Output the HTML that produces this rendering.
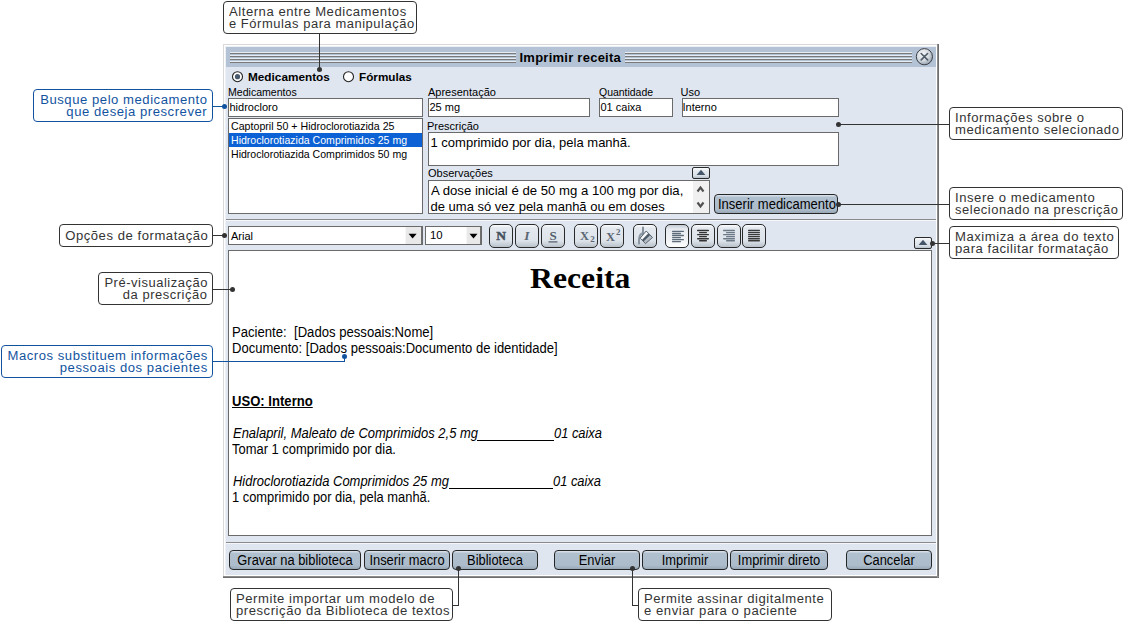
<!DOCTYPE html><html><head><meta charset="utf-8"><style>
html,body{margin:0;padding:0;background:#fff;}
#c{position:relative;width:1124px;height:622px;overflow:hidden;background:#fff;}
.t{position:absolute;white-space:pre;}
.r{position:absolute;}
.btn{position:absolute;box-sizing:border-box;border:1px solid #262626;border-radius:4px;background:linear-gradient(#d5dfe9 0,#d5dfe9 1px,#b1c0cf 2px,#adbccb 80%,#98a7b6 100%);}
.tb{position:absolute;box-sizing:border-box;border:1.5px solid #2a2a2a;border-radius:5px;background:linear-gradient(#fbfcfd 0,#e4e9ef 3px,#dde3ea 72%,#b8c1ca 100%);}
</style></head><body><div id="c">
<div class="r" style="left:223px;top:44px;width:716px;height:534px;background:#6e6e6e;"></div>
<div class="r" style="left:223px;top:44px;width:714px;height:532px;background:#d9d9d9;"></div>
<div class="r" style="left:224px;top:45px;width:713px;height:531px;background:#fff;"></div>
<div class="r" style="left:224px;top:45px;width:712px;height:530px;background:#fff;"></div>
<div class="r" style="left:225px;top:46px;width:711px;height:529px;background:#edf1f5;"></div>
<div class="r" style="left:226px;top:47px;width:710px;height:528px;background:#dfe6f0;"></div>
<div class="r" style="left:937px;top:44px;width:1px;height:534px;background:#8c8c8c;"></div>
<div class="r" style="left:223px;top:576px;width:716px;height:1px;background:#8c8c8c;"></div>
<div class="r" style="left:226px;top:47px;width:710px;height:20px;background:#b3c2d4;"></div>
<div class="r" style="left:230px;top:52px;width:682px;height:1px;background:#e6ecf3;"></div>
<div class="r" style="left:230px;top:53px;width:682px;height:1px;background:#7a7a7a;"></div>
<div class="r" style="left:230px;top:55px;width:682px;height:1px;background:#e6ecf3;"></div>
<div class="r" style="left:230px;top:56px;width:682px;height:1px;background:#7a7a7a;"></div>
<div class="r" style="left:230px;top:58px;width:682px;height:1px;background:#e6ecf3;"></div>
<div class="r" style="left:230px;top:59px;width:682px;height:1px;background:#7a7a7a;"></div>
<div class="r" style="left:230px;top:61px;width:682px;height:1px;background:#e6ecf3;"></div>
<div class="r" style="left:230px;top:62px;width:682px;height:1px;background:#7a7a7a;"></div>
<div class="r" style="left:516px;top:47px;width:109px;height:20px;background:#b3c2d4;"></div>
<div class="t" style="left:519.5px;top:50.50px;font-family:'Liberation Sans',sans-serif;font-size:13px;line-height:13px;font-weight:bold;font-style:normal;color:#000;transform:scaleX(1.0);transform-origin:left top;letter-spacing:0.25px;">Imprimir receita</div>
<svg class="r" style="left:914px;top:46px" width="21" height="21" viewBox="0 0 21 21">
<defs><radialGradient id="cg" cx="0.4" cy="0.35" r="0.7"><stop offset="0" stop-color="#f6f8fa"/><stop offset="0.55" stop-color="#d5dbe2"/><stop offset="1" stop-color="#8e99a5"/></radialGradient></defs>
<circle cx="10.4" cy="10.7" r="8.1" fill="url(#cg)" stroke="#3b3f45" stroke-width="1"/>
<path d="M7.2 7.5 L13.6 13.9 M13.6 7.5 L7.2 13.9" stroke="#4f5b68" stroke-width="1.6" stroke-linecap="round"/>
</svg>
<svg class="r" style="left:231px;top:70px" width="14" height="14" viewBox="0 0 14 14">
<circle cx="6.5" cy="6.7" r="5" fill="#fff" stroke="#222" stroke-width="1.1"/><circle cx="6.5" cy="6.7" r="2.6" fill="#4a5a6e"/></svg>
<svg class="r" style="left:342px;top:70px" width="14" height="14" viewBox="0 0 14 14">
<circle cx="6.5" cy="6.7" r="5" fill="#fff" stroke="#222" stroke-width="1.1"/></svg>
<div class="t" style="left:247.5px;top:71.87px;font-family:'Liberation Sans',sans-serif;font-size:11.5px;line-height:11.5px;font-weight:bold;font-style:normal;color:#000;transform:scaleX(1.025);transform-origin:left top;">Medicamentos</div>
<div class="t" style="left:358.5px;top:71.87px;font-family:'Liberation Sans',sans-serif;font-size:11.5px;line-height:11.5px;font-weight:bold;font-style:normal;color:#000;transform:scaleX(1.02);transform-origin:left top;">Fórmulas</div>
<div class="t" style="left:227.5px;top:87.19px;font-family:'Liberation Sans',sans-serif;font-size:11px;line-height:11px;font-weight:normal;font-style:normal;color:#000;transform:scaleX(0.96);transform-origin:left top;">Medicamentos</div>
<div class="t" style="left:428px;top:87.19px;font-family:'Liberation Sans',sans-serif;font-size:11px;line-height:11px;font-weight:normal;font-style:normal;color:#000;">Apresentação</div>
<div class="t" style="left:599px;top:87.19px;font-family:'Liberation Sans',sans-serif;font-size:11px;line-height:11px;font-weight:normal;font-style:normal;color:#000;transform:scaleX(0.95);transform-origin:left top;">Quantidade</div>
<div class="t" style="left:680.5px;top:87.19px;font-family:'Liberation Sans',sans-serif;font-size:11px;line-height:11px;font-weight:normal;font-style:normal;color:#000;">Uso</div>
<div class="r" style="left:228px;top:98px;width:195px;height:19px;box-sizing:border-box;border:1px solid #6a6a6a;background:#fff;"></div>
<div class="r" style="left:428px;top:98px;width:162px;height:19px;box-sizing:border-box;border:1px solid #6a6a6a;background:#fff;"></div>
<div class="r" style="left:599px;top:98px;width:74px;height:19px;box-sizing:border-box;border:1px solid #6a6a6a;background:#fff;"></div>
<div class="r" style="left:682px;top:98px;width:157px;height:19px;box-sizing:border-box;border:1px solid #6a6a6a;background:#fff;"></div>
<div class="t" style="left:229.5px;top:102.19px;font-family:'Liberation Sans',sans-serif;font-size:11px;line-height:11px;font-weight:normal;font-style:normal;color:#000;">hidrocloro</div>
<div class="t" style="left:429.5px;top:102.19px;font-family:'Liberation Sans',sans-serif;font-size:11px;line-height:11px;font-weight:normal;font-style:normal;color:#000;">25 mg</div>
<div class="t" style="left:600.5px;top:102.19px;font-family:'Liberation Sans',sans-serif;font-size:11px;line-height:11px;font-weight:normal;font-style:normal;color:#000;">01 caixa</div>
<div class="t" style="left:682.5px;top:102.19px;font-family:'Liberation Sans',sans-serif;font-size:11px;line-height:11px;font-weight:normal;font-style:normal;color:#000;">Interno</div>
<div class="r" style="left:228px;top:118px;width:195px;height:96px;box-sizing:border-box;border:1px solid #6a6a6a;background:#fff;"></div>
<div class="r" style="left:229px;top:133px;width:193px;height:14px;background:#0c62d4;"></div>
<div class="t" style="left:230.5px;top:120.69px;font-family:'Liberation Sans',sans-serif;font-size:11px;line-height:11px;font-weight:normal;font-style:normal;color:#000;transform:scaleX(0.967);transform-origin:left top;">Captopril 50 + Hidroclorotiazida 25</div>
<div class="t" style="left:230.5px;top:134.69px;font-family:'Liberation Sans',sans-serif;font-size:11px;line-height:11px;font-weight:normal;font-style:normal;color:#fff;transform:scaleX(0.96);transform-origin:left top;">Hidroclorotiazida Comprimidos 25 mg</div>
<div class="t" style="left:230.5px;top:148.69px;font-family:'Liberation Sans',sans-serif;font-size:11px;line-height:11px;font-weight:normal;font-style:normal;color:#000;transform:scaleX(0.96);transform-origin:left top;">Hidroclorotiazida Comprimidos 50 mg</div>
<div class="t" style="left:427px;top:121.19px;font-family:'Liberation Sans',sans-serif;font-size:11px;line-height:11px;font-weight:normal;font-style:normal;color:#000;">Prescrição</div>
<div class="r" style="left:428px;top:132px;width:411px;height:34px;box-sizing:border-box;border:1px solid #6a6a6a;background:#fff;"></div>
<div class="t" style="left:430.5px;top:135.50px;font-family:'Liberation Sans',sans-serif;font-size:13px;line-height:13px;font-weight:normal;font-style:normal;color:#000;">1 comprimido por dia, pela manhã.</div>
<div class="t" style="left:428px;top:167.69px;font-family:'Liberation Sans',sans-serif;font-size:11px;line-height:11px;font-weight:normal;font-style:normal;color:#000;">Observações</div>
<div class="r" style="left:428px;top:180px;width:282px;height:34px;box-sizing:border-box;border:1px solid #6a6a6a;background:#fff;"></div>
<div class="r" style="left:693px;top:181px;width:16px;height:32px;background:#f0f0f0;"></div>
<svg class="r" style="left:693px;top:181px" width="16" height="32" viewBox="0 0 16 32">
<path d="M4.5 10.5 L7.5 6.5 L10.5 10.5" fill="none" stroke="#505050" stroke-width="2.1"/>
<path d="M4.5 21.5 L7.5 25.5 L10.5 21.5" fill="none" stroke="#505050" stroke-width="2.1"/></svg>
<div class="t" style="left:430.5px;top:183.50px;font-family:'Liberation Sans',sans-serif;font-size:13px;line-height:13px;font-weight:normal;font-style:normal;color:#000;transform:scaleX(1.012);transform-origin:left top;">A dose inicial é de 50 mg a 100 mg por dia,</div>
<div class="t" style="left:430.5px;top:200.00px;font-family:'Liberation Sans',sans-serif;font-size:13px;line-height:13px;font-weight:normal;font-style:normal;color:#000;">de uma só vez pela manhã ou em doses</div>
<div class="tb" style="left:692px;top:167px;width:18px;height:12px;border-radius:2px;"></div>
<svg class="r" style="left:692px;top:167px" width="18" height="12" viewBox="0 0 18 12"><path d="M4.6 7.9 L9 2.8 L13.4 7.9 Z" fill="#46566a"/></svg>
<div class="btn" style="left:714px;top:194px;width:124px;height:20px;"></div>
<div class="t" style="left:717.5px;top:197.15px;font-family:'Liberation Sans',sans-serif;font-size:14px;line-height:14px;font-weight:normal;font-style:normal;color:#000;transform:scaleX(0.93);transform-origin:left top;">Inserir medicamento</div>
<div class="r" style="left:226px;top:219px;width:710px;height:1px;background:#8a8a8a;"></div>
<div class="r" style="left:226px;top:220px;width:710px;height:1px;background:#f4f6f9;"></div>
<div class="r" style="left:228px;top:226px;width:195px;height:19px;box-sizing:border-box;border:1px solid #6a6a6a;background:#fff;"></div>
<div class="r" style="left:421px;top:227px;width:1px;height:17px;background:#707070;"></div>
<div class="r" style="left:405px;top:227px;width:16px;height:17px;background:#e9e9e9;border-left:1px solid #f6f6f6;box-sizing:border-box;"></div>
<svg class="r" style="left:404px;top:227px" width="18" height="18" viewBox="0 0 18 18"><path d="M4.6 6.7 L12.6 6.7 L8.6 11.4 Z" fill="#000"/></svg>
<div class="t" style="left:231px;top:230.69px;font-family:'Liberation Sans',sans-serif;font-size:11px;line-height:11px;font-weight:normal;font-style:normal;color:#000;">Arial</div>
<div class="r" style="left:425px;top:226px;width:57px;height:19px;box-sizing:border-box;border:1px solid #6a6a6a;background:#fff;"></div>
<div class="r" style="left:480px;top:227px;width:1px;height:17px;background:#707070;"></div>
<div class="r" style="left:466px;top:227px;width:14px;height:17px;background:#e9e9e9;border-left:1px solid #f6f6f6;box-sizing:border-box;"></div>
<svg class="r" style="left:465px;top:227px" width="17" height="18" viewBox="0 0 17 18"><path d="M4.5 6.7 L12.5 6.7 L8.5 11.4 Z" fill="#000"/></svg>
<div class="t" style="left:429.5px;top:230.19px;font-family:'Liberation Sans',sans-serif;font-size:11px;line-height:11px;font-weight:normal;font-style:normal;color:#000;transform:scaleX(1.03);transform-origin:left top;">10</div>
<div class="tb" style="left:489px;top:224px;width:24px;height:24px;"></div>
<svg class="r" style="left:489px;top:224px" width="24" height="24" viewBox="0 0 24 24"><text x="12" y="16" text-anchor="middle" style="font-family:'Liberation Serif',serif;font-weight:bold;font-size:13.5px" fill="#46525f" stroke="#46525f" stroke-width="0.5">N</text></svg>
<div class="tb" style="left:515px;top:224px;width:24px;height:24px;"></div>
<svg class="r" style="left:515px;top:224px" width="24" height="24" viewBox="0 0 24 24"><text x="12" y="16" text-anchor="middle" style="font-family:'Liberation Serif',serif;font-weight:bold;font-size:13.5px;font-style:italic" fill="#5b6672">I</text></svg>
<div class="tb" style="left:541px;top:224px;width:24px;height:24px;"></div>
<svg class="r" style="left:541px;top:224px" width="24" height="24" viewBox="0 0 24 24"><text x="12" y="15.5" text-anchor="middle" style="font-family:'Liberation Serif',serif;font-weight:bold;font-size:13px" fill="#4f5b68">S</text><rect x="7.5" y="17.3" width="9" height="1.2" fill="#4f5b68"/></svg>
<div class="tb" style="left:574px;top:224px;width:24px;height:24px;"></div>
<svg class="r" style="left:574px;top:224px" width="24" height="24" viewBox="0 0 24 24"><text x="10.5" y="16" text-anchor="middle" style="font-family:'Liberation Serif',serif;font-weight:bold;font-size:12.5px" fill="#5c6874">X</text><text x="18.5" y="18" text-anchor="middle" style="font-family:'Liberation Serif',serif;font-weight:bold;font-size:9px" fill="#5c6874">2</text></svg>
<div class="tb" style="left:600px;top:224px;width:24px;height:24px;"></div>
<svg class="r" style="left:600px;top:224px" width="24" height="24" viewBox="0 0 24 24"><text x="10.5" y="17" text-anchor="middle" style="font-family:'Liberation Serif',serif;font-weight:bold;font-size:12.5px" fill="#5c6874">X</text><text x="18.2" y="11.2" text-anchor="middle" style="font-family:'Liberation Serif',serif;font-weight:bold;font-size:9px" fill="#5c6874">2</text></svg>
<div class="tb" style="left:633px;top:224px;width:24px;height:24px;"></div>
<svg class="r" style="left:633px;top:224px" width="24" height="24" viewBox="0 0 24 24"><path d="M10 3.5 L10 12" stroke="#7d8893" stroke-width="1.8" stroke-linecap="round"/><path d="M9 9.5 Q5.5 11 6 19.5" fill="none" stroke="#8a949e" stroke-width="2" stroke-linecap="round"/><polygon points="7.1,14.2 13.2,7 15.4,9.3 9.0,16.1" fill="#f4f6f8"/><polygon points="9.0,16.1 15.4,9.3 17.3,11.2 10.6,17.7" fill="#4d5a68"/><polygon points="10.6,17.7 17.3,11.2 19.5,13.5 12.5,19.6" fill="#b3bac2"/><polygon points="7.1,14.2 13.2,7 19.5,13.5 12.5,19.6" fill="none" stroke="#56626f" stroke-width="1"/></svg>
<div class="tb" style="left:665px;top:224px;width:24px;height:24px;background:linear-gradient(#c3cad3 0,#e6eaef 4px,#f1f3f6 70%,#fdfdfe 100%);"></div>
<svg class="r" style="left:665px;top:224px" width="24" height="24" viewBox="0 0 24 24"><rect x="7" y="6.75" width="12" height="1.35" rx="0.6" fill="#5b6b7a"/><rect x="7" y="8.80" width="9" height="1.35" rx="0.6" fill="#5b6b7a"/><rect x="7" y="10.85" width="12" height="1.35" rx="0.6" fill="#5b6b7a"/><rect x="7" y="12.90" width="9" height="1.35" rx="0.6" fill="#5b6b7a"/><rect x="7" y="14.95" width="12" height="1.35" rx="0.6" fill="#5b6b7a"/><rect x="7" y="17.00" width="9" height="1.35" rx="0.6" fill="#5b6b7a"/></svg>
<div class="tb" style="left:691px;top:224px;width:24px;height:24px;"></div>
<svg class="r" style="left:691px;top:224px" width="24" height="24" viewBox="0 0 24 24"><rect x="6" y="5.85" width="12" height="1.35" rx="0.6" fill="#333"/><rect x="8" y="7.90" width="8" height="1.35" rx="0.6" fill="#333"/><rect x="6" y="9.95" width="12" height="1.35" rx="0.6" fill="#333"/><rect x="8" y="12.00" width="8" height="1.35" rx="0.6" fill="#333"/><rect x="6" y="14.05" width="12" height="1.35" rx="0.6" fill="#333"/><rect x="8" y="16.10" width="8" height="1.35" rx="0.6" fill="#333"/></svg>
<div class="tb" style="left:717px;top:224px;width:24px;height:24px;"></div>
<svg class="r" style="left:717px;top:224px" width="24" height="24" viewBox="0 0 24 24"><rect x="6" y="5.85" width="12" height="1.35" rx="0.6" fill="#6b7886"/><rect x="9" y="7.90" width="9" height="1.35" rx="0.6" fill="#6b7886"/><rect x="6" y="9.95" width="12" height="1.35" rx="0.6" fill="#6b7886"/><rect x="9" y="12.00" width="9" height="1.35" rx="0.6" fill="#6b7886"/><rect x="6" y="14.05" width="12" height="1.35" rx="0.6" fill="#6b7886"/><rect x="9" y="16.10" width="9" height="1.35" rx="0.6" fill="#6b7886"/></svg>
<div class="tb" style="left:742px;top:224px;width:24px;height:24px;"></div>
<svg class="r" style="left:742px;top:224px" width="24" height="24" viewBox="0 0 24 24"><rect x="6" y="5.85" width="12" height="1.35" rx="0.6" fill="#3a3a3a"/><rect x="6" y="7.90" width="12" height="1.35" rx="0.6" fill="#3a3a3a"/><rect x="6" y="9.95" width="12" height="1.35" rx="0.6" fill="#3a3a3a"/><rect x="6" y="12.00" width="12" height="1.35" rx="0.6" fill="#3a3a3a"/><rect x="6" y="14.05" width="12" height="1.35" rx="0.6" fill="#3a3a3a"/><rect x="6" y="16.10" width="12" height="1.35" rx="0.6" fill="#3a3a3a"/></svg>
<div class="tb" style="left:914px;top:237px;width:18px;height:12px;border-radius:2px;"></div>
<svg class="r" style="left:914px;top:237px" width="18" height="12" viewBox="0 0 18 12"><path d="M4.6 7.9 L9 2.8 L13.4 7.9 Z" fill="#46566a"/></svg>
<div class="r" style="left:228px;top:250px;width:704px;height:286px;box-sizing:border-box;border:1px solid #6a6a6a;background:#fff;"></div>
<div class="t" style="left:530px;top:264.29px;font-family:'Liberation Serif',sans-serif;font-size:29.5px;line-height:29.5px;font-weight:bold;font-style:normal;color:#000;transform:scaleX(1.075);transform-origin:left top;">Receita</div>
<div class="t" style="left:231.5px;top:325.15px;font-family:'Liberation Sans',sans-serif;font-size:14px;line-height:14px;font-weight:normal;font-style:normal;color:#000;transform:scaleX(0.937);transform-origin:left top;">Paciente:  [Dados pessoais:Nome]</div>
<div class="t" style="left:231.5px;top:341.15px;font-family:'Liberation Sans',sans-serif;font-size:14px;line-height:14px;font-weight:normal;font-style:normal;color:#000;transform:scaleX(0.93);transform-origin:left top;">Documento: [Dados pessoais:Documento de identidade]</div>
<div class="t" style="left:232px;top:394.15px;font-family:'Liberation Sans',sans-serif;font-size:14px;line-height:14px;font-weight:bold;font-style:normal;color:#000;transform:scaleX(0.935);transform-origin:left top;text-decoration:underline;">USO: Interno</div>
<div class="t" style="left:232.5px;top:426.15px;font-family:'Liberation Sans',sans-serif;font-size:14px;line-height:14px;font-weight:normal;font-style:italic;color:#000;transform:scaleX(0.926);transform-origin:left top;">Enalapril, Maleato de Comprimidos 2,5 mg</div>
<div class="r" style="left:477px;top:440px;width:77px;height:1px;background:#000;"></div>
<div class="t" style="left:554px;top:426.15px;font-family:'Liberation Sans',sans-serif;font-size:14px;line-height:14px;font-weight:normal;font-style:italic;color:#000;transform:scaleX(0.92);transform-origin:left top;">01 caixa</div>
<div class="t" style="left:232px;top:442.15px;font-family:'Liberation Sans',sans-serif;font-size:14px;line-height:14px;font-weight:normal;font-style:normal;color:#000;transform:scaleX(0.924);transform-origin:left top;">Tomar 1 comprimido por dia.</div>
<div class="t" style="left:232.5px;top:474.15px;font-family:'Liberation Sans',sans-serif;font-size:14px;line-height:14px;font-weight:normal;font-style:italic;color:#000;transform:scaleX(0.925);transform-origin:left top;">Hidroclorotiazida Comprimidos 25 mg</div>
<div class="r" style="left:449px;top:488px;width:104px;height:1px;background:#000;"></div>
<div class="t" style="left:553px;top:474.15px;font-family:'Liberation Sans',sans-serif;font-size:14px;line-height:14px;font-weight:normal;font-style:italic;color:#000;transform:scaleX(0.92);transform-origin:left top;">01 caixa</div>
<div class="t" style="left:231.5px;top:490.15px;font-family:'Liberation Sans',sans-serif;font-size:14px;line-height:14px;font-weight:normal;font-style:normal;color:#000;transform:scaleX(0.92);transform-origin:left top;">1 comprimido por dia, pela manhã.</div>
<div class="r" style="left:226px;top:542px;width:710px;height:1px;background:#8a8a8a;"></div>
<div class="r" style="left:226px;top:543px;width:710px;height:1px;background:#f4f6f9;"></div>
<div class="btn" style="left:229px;top:550px;width:132px;height:20px;"></div>
<div class="t" style="left:229px;top:550.2px;width:132px;height:20px;line-height:20px;text-align:center;font-family:'Liberation Sans',sans-serif;font-size:14px;color:#000;transform:scaleX(0.92);">Gravar na biblioteca</div>
<div class="btn" style="left:364px;top:550px;width:86px;height:20px;"></div>
<div class="t" style="left:364px;top:550.2px;width:86px;height:20px;line-height:20px;text-align:center;font-family:'Liberation Sans',sans-serif;font-size:14px;color:#000;transform:scaleX(0.92);">Inserir macro</div>
<div class="btn" style="left:452px;top:550px;width:86px;height:20px;"></div>
<div class="t" style="left:452px;top:550.2px;width:86px;height:20px;line-height:20px;text-align:center;font-family:'Liberation Sans',sans-serif;font-size:14px;color:#000;transform:scaleX(0.92);">Biblioteca</div>
<div class="btn" style="left:554px;top:550px;width:86px;height:20px;"></div>
<div class="t" style="left:554px;top:550.2px;width:86px;height:20px;line-height:20px;text-align:center;font-family:'Liberation Sans',sans-serif;font-size:14px;color:#000;transform:scaleX(0.92);">Enviar</div>
<div class="btn" style="left:642px;top:550px;width:86px;height:20px;"></div>
<div class="t" style="left:642px;top:550.2px;width:86px;height:20px;line-height:20px;text-align:center;font-family:'Liberation Sans',sans-serif;font-size:14px;color:#000;transform:scaleX(0.92);">Imprimir</div>
<div class="btn" style="left:730px;top:550px;width:98px;height:20px;"></div>
<div class="t" style="left:730px;top:550.2px;width:98px;height:20px;line-height:20px;text-align:center;font-family:'Liberation Sans',sans-serif;font-size:14px;color:#000;transform:scaleX(0.92);">Imprimir direto</div>
<div class="btn" style="left:846px;top:550px;width:86px;height:20px;"></div>
<div class="t" style="left:846px;top:550.2px;width:86px;height:20px;line-height:20px;text-align:center;font-family:'Liberation Sans',sans-serif;font-size:14px;color:#000;transform:scaleX(0.92);">Cancelar</div>
<div class="r" style="left:223px;top:1px;width:194px;height:33px;box-sizing:border-box;border:1px solid #333;border-radius:4px;background:#fff;"></div>
<div class="t" style="left:228.5px;top:5.84px;font-family:'Liberation Sans',sans-serif;font-size:12px;line-height:12px;font-weight:normal;font-style:normal;color:#333;transform:scaleX(1.09);transform-origin:left top;letter-spacing:0.5px;">Alterna entre Medicamentos</div>
<div class="t" style="left:228.5px;top:17.84px;font-family:'Liberation Sans',sans-serif;font-size:12px;line-height:12px;font-weight:normal;font-style:normal;color:#333;transform:scaleX(1.0782);transform-origin:left top;letter-spacing:0.5px;">e Fórmulas para manipulação</div>
<div class="r" style="left:319px;top:34px;width:1px;height:35px;background:#333;"></div>
<div class="r" style="left:317.0px;top:66.5px;width:5.0px;height:5.0px;border-radius:50%;background:#333;"></div>
<div class="r" style="left:33px;top:89px;width:180px;height:33px;box-sizing:border-box;border:1px solid #1253a0;border-radius:4px;background:#fff;"></div>
<div class="t" style="right:916.5px;top:93.84px;font-family:'Liberation Sans',sans-serif;font-size:12px;line-height:12px;font-weight:normal;font-style:normal;color:#1253a0;transform:scaleX(1.09);transform-origin:right top;letter-spacing:0.5px;">Busque pelo medicamento</div>
<div class="t" style="right:916.5px;top:105.84px;font-family:'Liberation Sans',sans-serif;font-size:12px;line-height:12px;font-weight:normal;font-style:normal;color:#1253a0;transform:scaleX(1.09);transform-origin:right top;letter-spacing:0.5px;">que deseja prescrever</div>
<div class="r" style="left:213px;top:106px;width:11px;height:1px;background:#1253a0;"></div>
<div class="r" style="left:222.0px;top:104.0px;width:5.0px;height:5.0px;border-radius:50%;background:#1253a0;"></div>
<div class="r" style="left:59px;top:224px;width:154px;height:23px;box-sizing:border-box;border:1px solid #333;border-radius:4px;background:#fff;"></div>
<div class="t" style="right:916px;top:229.84px;font-family:'Liberation Sans',sans-serif;font-size:12px;line-height:12px;font-weight:normal;font-style:normal;color:#333;transform:scaleX(1.09);transform-origin:right top;letter-spacing:0.5px;">Opções de formatação</div>
<div class="r" style="left:213px;top:235px;width:11px;height:1px;background:#333;"></div>
<div class="r" style="left:222.0px;top:233.0px;width:5.0px;height:5.0px;border-radius:50%;background:#333;"></div>
<div class="r" style="left:98px;top:272px;width:115px;height:33px;box-sizing:border-box;border:1px solid #333;border-radius:4px;background:#fff;"></div>
<div class="t" style="right:916px;top:276.84px;font-family:'Liberation Sans',sans-serif;font-size:12px;line-height:12px;font-weight:normal;font-style:normal;color:#333;transform:scaleX(1.0791);transform-origin:right top;letter-spacing:0.5px;">Pré-visualização</div>
<div class="t" style="right:916px;top:288.84px;font-family:'Liberation Sans',sans-serif;font-size:12px;line-height:12px;font-weight:normal;font-style:normal;color:#333;transform:scaleX(1.0791);transform-origin:right top;letter-spacing:0.5px;">da prescrição</div>
<div class="r" style="left:213px;top:289px;width:19px;height:1px;background:#333;"></div>
<div class="r" style="left:230.0px;top:287.0px;width:5.0px;height:5.0px;border-radius:50%;background:#333;"></div>
<div class="r" style="left:1px;top:345px;width:212px;height:33px;box-sizing:border-box;border:1px solid #1253a0;border-radius:4px;background:#fff;"></div>
<div class="t" style="right:916px;top:349.84px;font-family:'Liberation Sans',sans-serif;font-size:12px;line-height:12px;font-weight:normal;font-style:normal;color:#1253a0;transform:scaleX(1.09);transform-origin:right top;letter-spacing:0.5px;">Macros substituem informações</div>
<div class="t" style="right:916px;top:361.84px;font-family:'Liberation Sans',sans-serif;font-size:12px;line-height:12px;font-weight:normal;font-style:normal;color:#1253a0;transform:scaleX(1.09);transform-origin:right top;letter-spacing:0.5px;">pessoais dos pacientes</div>
<div class="r" style="left:213px;top:361px;width:132px;height:1px;background:#1253a0;"></div>
<div class="r" style="left:344px;top:356px;width:1px;height:6px;background:#1253a0;"></div>
<div class="r" style="left:342.0px;top:353.5px;width:5.0px;height:5.0px;border-radius:50%;background:#1253a0;"></div>
<div class="r" style="left:949px;top:107px;width:174px;height:33px;box-sizing:border-box;border:1px solid #333;border-radius:4px;background:#fff;"></div>
<div class="t" style="left:954.5px;top:111.84px;font-family:'Liberation Sans',sans-serif;font-size:12px;line-height:12px;font-weight:normal;font-style:normal;color:#333;transform:scaleX(1.09);transform-origin:left top;letter-spacing:0.5px;">Informações sobre o</div>
<div class="t" style="left:954.5px;top:123.84px;font-family:'Liberation Sans',sans-serif;font-size:12px;line-height:12px;font-weight:normal;font-style:normal;color:#333;transform:scaleX(1.09);transform-origin:left top;letter-spacing:0.5px;">medicamento selecionado</div>
<div class="r" style="left:838px;top:124px;width:111px;height:1px;background:#333;"></div>
<div class="r" style="left:835.5px;top:122.0px;width:5.0px;height:5.0px;border-radius:50%;background:#333;"></div>
<div class="r" style="left:949px;top:187px;width:174px;height:33px;box-sizing:border-box;border:1px solid #333;border-radius:4px;background:#fff;"></div>
<div class="t" style="left:954.5px;top:191.84px;font-family:'Liberation Sans',sans-serif;font-size:12px;line-height:12px;font-weight:normal;font-style:normal;color:#333;transform:scaleX(1.09);transform-origin:left top;letter-spacing:0.5px;">Insere o medicamento</div>
<div class="t" style="left:954.5px;top:203.84px;font-family:'Liberation Sans',sans-serif;font-size:12px;line-height:12px;font-weight:normal;font-style:normal;color:#333;transform:scaleX(1.0765);transform-origin:left top;letter-spacing:0.5px;">selecionado na prescrição</div>
<div class="r" style="left:838px;top:204px;width:111px;height:1px;background:#333;"></div>
<div class="r" style="left:835.5px;top:202.0px;width:5.0px;height:5.0px;border-radius:50%;background:#333;"></div>
<div class="r" style="left:949px;top:226px;width:170px;height:33px;box-sizing:border-box;border:1px solid #333;border-radius:4px;background:#fff;"></div>
<div class="t" style="left:954.5px;top:230.84px;font-family:'Liberation Sans',sans-serif;font-size:12px;line-height:12px;font-weight:normal;font-style:normal;color:#333;transform:scaleX(1.09);transform-origin:left top;letter-spacing:0.5px;">Maximiza a área do texto</div>
<div class="t" style="left:954.5px;top:242.84px;font-family:'Liberation Sans',sans-serif;font-size:12px;line-height:12px;font-weight:normal;font-style:normal;color:#333;transform:scaleX(1.09);transform-origin:left top;letter-spacing:0.5px;">para facilitar formatação</div>
<div class="r" style="left:932px;top:243px;width:17px;height:1px;background:#333;"></div>
<div class="r" style="left:929.5px;top:241.0px;width:5.0px;height:5.0px;border-radius:50%;background:#333;"></div>
<div class="r" style="left:230px;top:588px;width:223px;height:33px;box-sizing:border-box;border:1px solid #333;border-radius:4px;background:#fff;"></div>
<div class="t" style="left:236px;top:592.84px;font-family:'Liberation Sans',sans-serif;font-size:12px;line-height:12px;font-weight:normal;font-style:normal;color:#333;transform:scaleX(1.09);transform-origin:left top;letter-spacing:0.5px;">Permite importar um modelo de</div>
<div class="t" style="left:236px;top:604.84px;font-family:'Liberation Sans',sans-serif;font-size:12px;line-height:12px;font-weight:normal;font-style:normal;color:#333;transform:scaleX(1.09);transform-origin:left top;letter-spacing:0.5px;">prescrição da Biblioteca de textos</div>
<div class="r" style="left:453px;top:605px;width:6px;height:1px;background:#333;"></div>
<div class="r" style="left:458px;top:568px;width:1px;height:38px;background:#333;"></div>
<div class="r" style="left:456.0px;top:565.5px;width:5.0px;height:5.0px;border-radius:50%;background:#333;"></div>
<div class="r" style="left:638px;top:588px;width:194px;height:33px;box-sizing:border-box;border:1px solid #333;border-radius:4px;background:#fff;"></div>
<div class="t" style="left:644px;top:592.84px;font-family:'Liberation Sans',sans-serif;font-size:12px;line-height:12px;font-weight:normal;font-style:normal;color:#333;transform:scaleX(1.09);transform-origin:left top;letter-spacing:0.5px;">Permite assinar digitalmente</div>
<div class="t" style="left:644px;top:604.84px;font-family:'Liberation Sans',sans-serif;font-size:12px;line-height:12px;font-weight:normal;font-style:normal;color:#333;transform:scaleX(1.09);transform-origin:left top;letter-spacing:0.5px;">e enviar para o paciente</div>
<div class="r" style="left:632px;top:568px;width:1px;height:38px;background:#333;"></div>
<div class="r" style="left:632px;top:605px;width:7px;height:1px;background:#333;"></div>
<div class="r" style="left:630.0px;top:565.5px;width:5.0px;height:5.0px;border-radius:50%;background:#333;"></div>
</div></body></html>
